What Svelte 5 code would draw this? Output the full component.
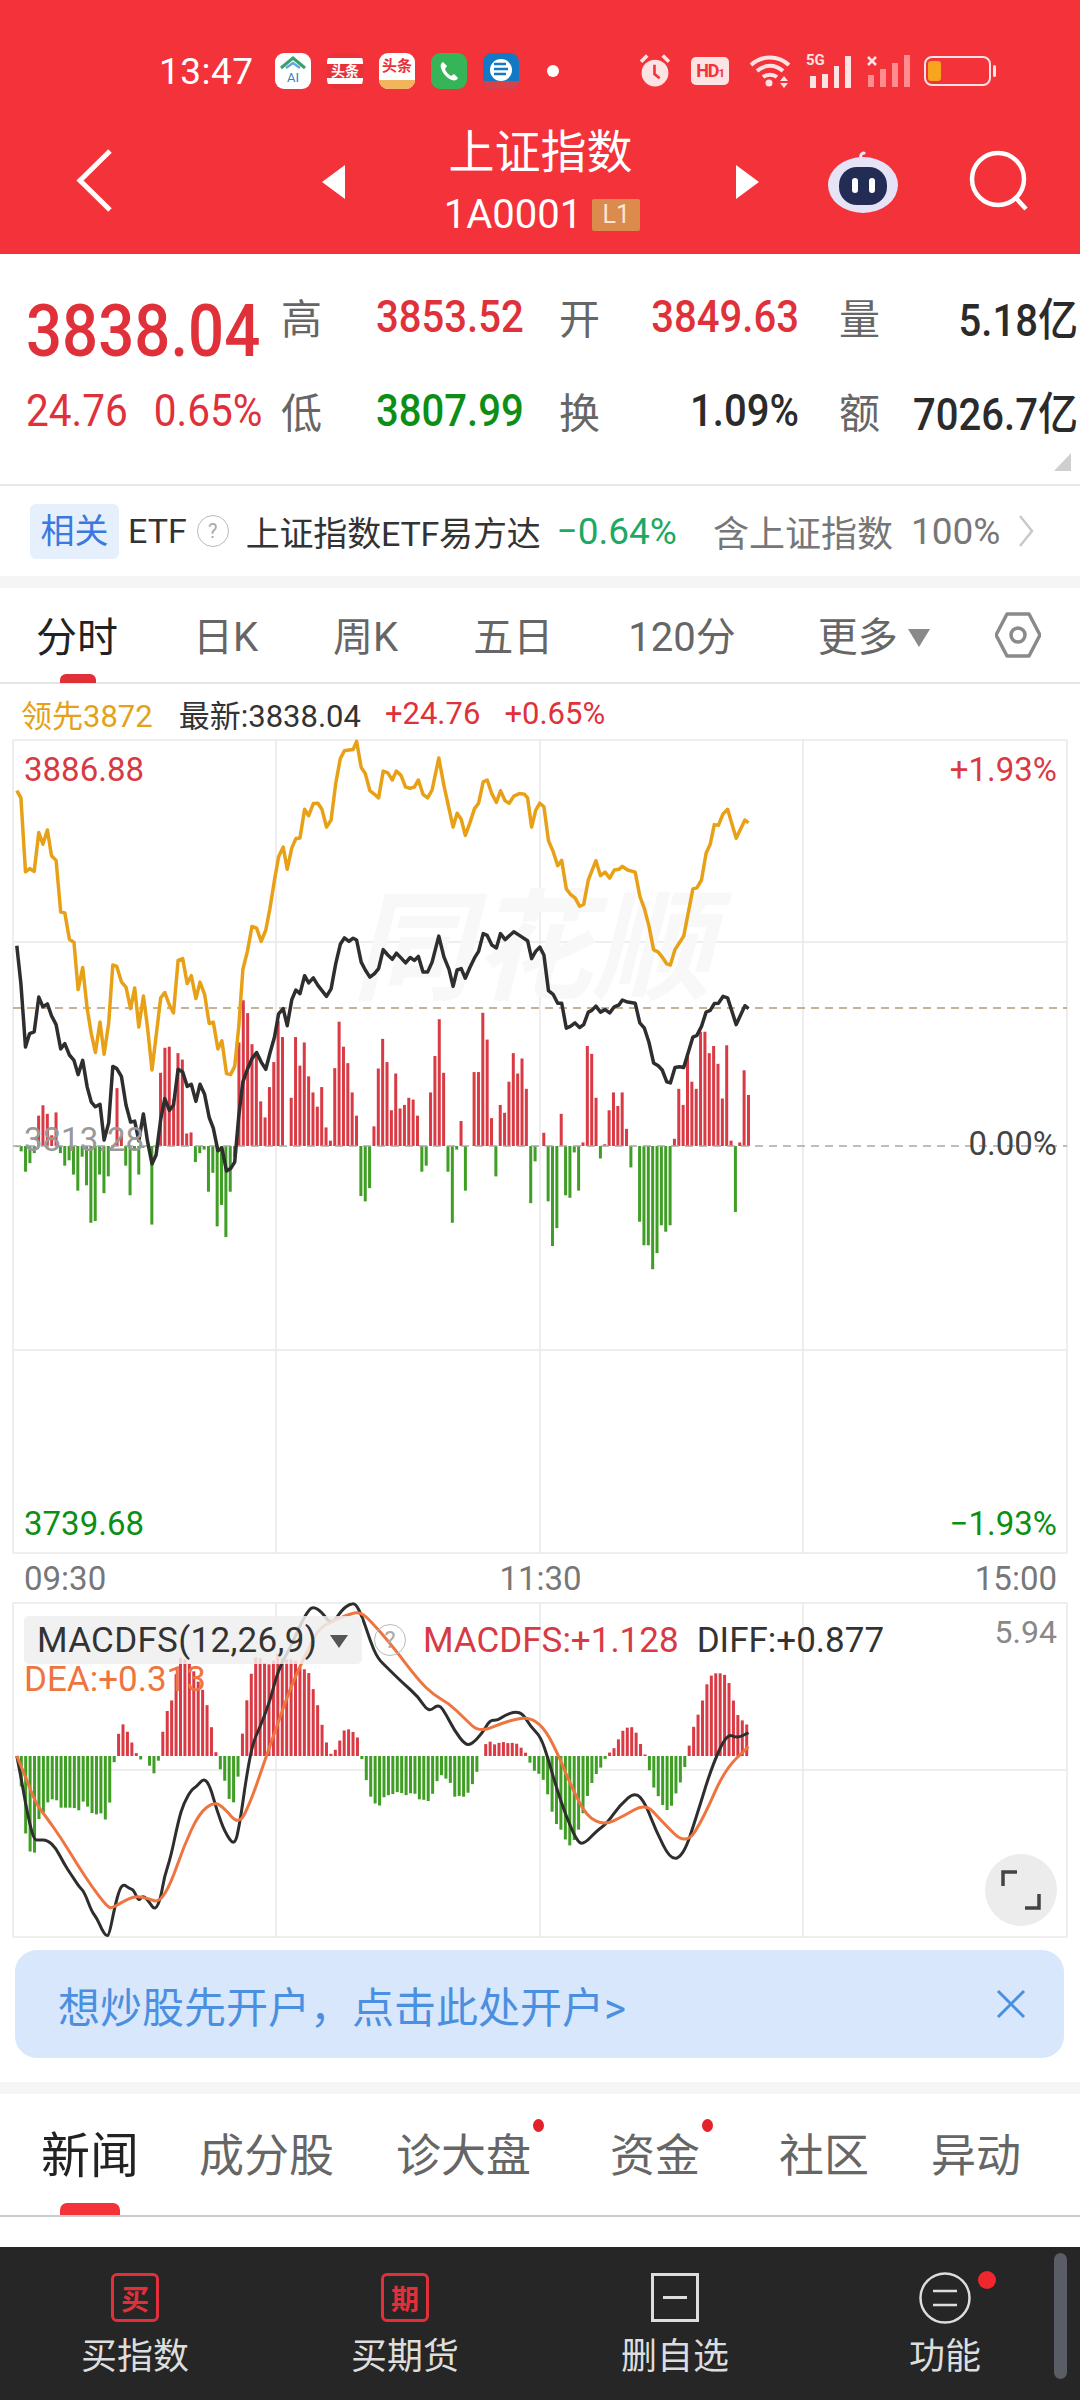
<script>
  const pts = (s, sx, sy, oy) => s.trim().split(/\s+/).map((p) => { const [x, y] = p.split(',').map(Number); return [x * sx, oy + y * sy]; });
  const poly = (a) => a.map((p) => p[0].toFixed(1) + ',' + p[1].toFixed(1)).join(' ');
  const smooth = (a) => {
    let d = `M${a[0][0].toFixed(1)} ${a[0][1].toFixed(1)}`;
    for (let i = 1; i < a.length - 1; i++) {
      const mx = (a[i][0] + a[i + 1][0]) / 2, my = (a[i][1] + a[i + 1][1]) / 2;
      d += `Q${a[i][0].toFixed(1)} ${a[i][1].toFixed(1)} ${mx.toFixed(1)} ${my.toFixed(1)}`;
    }
    const l = a[a.length - 1];
    return d + `L${l[0].toFixed(1)} ${l[1].toFixed(1)}`;
  };
  const SX = 1 / 1.96, SY = 1 / 2.8;
  const gold = poly(pts(`33,170 41,190 50,397 58,388 67,396 76,287 84,320 93,280 101,352 110,365 119,510 127,512 136,586 145,595 153,727 162,665 171,780 179,850 187,903 196,818 204,908 213,820 221,658 229,662 238,705 247,720 256,780 264,722 272,832 281,745 289,830 298,952 315,750 323,735 332,770 340,792 349,645 358,640 367,710 375,688 384,752 392,706 401,740 410,822 418,818 427,893 435,870 444,962 452,965 460,942 468,830 476,670 485,620 494,550 503,555 512,592 521,560 529,500 538,420 546,355 555,328 563,390 572,330 580,304 588,302 597,222 605,240 614,206 623,205 631,222 640,272 649,252 658,150 667,80 675,58 684,56 692,55 699,32 708,105 716,122 725,170 734,180 742,190 751,115 760,120 769,140 777,115 786,127 795,160 804,163 812,160 820,140 829,180 838,190 847,168 860,78 870,155 880,220 888,272 896,233 904,250 912,295 921,260 930,220 938,205 947,145 955,140 964,178 973,203 981,170 990,198 998,205 1007,185 1018,178 1028,180 1034,190 1042,272 1050,225 1058,205 1066,215 1075,310 1084,340 1093,380 1101,365 1110,445 1118,460 1127,470 1136,493 1144,488 1153,420 1160,395 1168,366 1177,408 1186,398 1195,415 1204,392 1213,390 1220,382 1230,392 1245,398 1254,465 1263,500 1272,550 1281,615 1290,622 1298,636 1307,655 1314,658 1323,615 1332,595 1340,577 1358,445 1366,442 1375,420 1384,345 1392,320 1400,265 1408,267 1417,235 1426,222 1443,303 1460,252 1467,260`, SX, SY, 730));
  const black = poly(pts(`33,604 41,710 50,888 58,850 67,845 76,748 84,775 93,767 101,800 110,825 119,893 127,878 136,910 145,925 153,965 162,925 171,1000 179,1042 187,1055 196,1048 204,1148 213,1100 221,942 229,948 238,970 247,1050 256,1098 264,1095 272,1150 281,1075 289,1150 298,1215 306,1190 315,1090 323,1032 332,1065 340,1050 349,950 358,958 367,998 375,992 384,1040 392,992 401,1020 410,1085 418,1115 427,1178 435,1170 444,1235 452,1228 460,1210 468,1080 476,985 485,950 494,920 503,903 512,930 521,950 529,905 538,860 546,795 555,780 563,828 572,755 580,728 588,738 597,688 605,708 614,694 623,715 640,746 649,725 658,655 667,600 675,582 684,592 692,583 699,588 708,650 716,672 725,692 734,682 742,668 751,615 760,630 769,642 777,625 786,638 795,652 804,637 812,645 820,634 829,678 838,678 847,650 860,577 870,635 880,670 888,718 896,672 904,668 912,695 921,665 930,638 938,620 947,570 955,575 964,602 973,610 981,570 990,587 1007,565 1018,575 1034,590 1042,640 1050,620 1058,608 1066,630 1075,730 1084,740 1093,765 1101,765 1110,835 1118,830 1127,820 1136,833 1144,825 1153,790 1160,785 1168,773 1177,790 1186,783 1195,792 1204,775 1213,770 1220,756 1230,762 1245,765 1254,820 1263,835 1272,875 1281,932 1290,940 1298,952 1307,985 1314,988 1323,945 1332,943 1340,945 1358,860 1366,855 1375,830 1384,790 1392,785 1400,766 1408,765 1417,746 1426,750 1443,825 1460,772 1467,780`, SX, SY, 730));
  const volData = [-3,-15,-72,-48,-20,85,114,90,30,94,-20,-55,-40,-80,-125,-30,-110,-215,-210,-80,-132,-85,-5,162,30,-55,-138,-10,-80,-5,0,-220,-5,205,275,278,130,260,242,35,38,-45,-20,-10,-128,-75,-225,-165,-255,-128,-30,290,408,372,285,262,125,80,165,235,350,305,0,135,305,225,290,195,150,110,165,52,15,218,348,278,232,150,85,-140,-155,-118,55,217,300,235,100,203,105,115,135,130,85,-72,-55,150,252,355,205,-72,-215,-10,70,-125,0,207,207,373,298,78,-85,115,93,180,260,203,245,160,-160,-43,0,37,-155,-280,-230,90,-138,-145,-18,-125,10,280,258,135,-35,5,100,150,112,150,48,-60,0,-212,-278,-278,-345,-300,-222,-240,-222,20,160,115,260,180,160,320,320,260,280,230,133,282,15,-185,10,212,143];
  const pitch = (1467 - 33) / (volData.length - 1);
  const vol = volData.map((v, i) => ({ x: (33 + pitch * i) * SX - 1.5, y: v > 0 ? 1146 - v * SY : 1146, h: Math.abs(v) * SY, red: v > 0 })).filter((b) => b.h > 0);

  const env = `33,0 41,-80 50,-230 58,-285 67,-298 76,-190 84,-172 93,-140 101,-130 110,-130 119,-155 145,-155 153,-168 162,-135 171,-150 179,-170 187,-178 196,-165 204,-198 213,-170 222,-38 230,52 238,100 247,85 256,45 264,30 272,-25 281,10 289,-10 298,-52 306,-52 315,25 323,118 332,150 340,180 349,295 358,295 367,285 375,270 384,240 392,210 401,190 410,120 418,60 427,-25 435,-50 444,-90 452,-150 460,-135 468,-45 476,80 485,180 494,260 503,305 512,290 521,275 529,275 538,290 546,310 555,290 572,290 580,285 588,265 597,260 605,250 614,200 623,150 631,95 640,40 649,5 658,20 667,50 675,78 684,80 692,72 700,60 708,0 716,-60 725,-118 734,-140 742,-155 751,-125 760,-118 769,-115 777,-108 786,-110 795,-118 804,-112 812,-110 820,-130 829,-130 838,-138 847,-118 855,-80 864,-55 872,-70 881,-60 886,-122 895,-122 904,-118 912,-125 921,-100 930,-72 938,-30 947,20 955,45 964,42 973,30 981,45 990,40 998,38 1007,40 1016,35 1024,20 1033,5 1041,-30 1050,-50 1059,-55 1067,-78 1076,-130 1085,-185 1094,-215 1103,-225 1111,-265 1120,-270 1129,-240 1137,-210 1146,-150 1155,-100 1163,-70 1172,-45 1180,-30 1190,5 1199,15 1207,30 1216,65 1225,85 1234,85 1243,88 1251,50 1260,22 1270,-20 1278,-85 1287,-110 1296,-140 1304,-160 1313,-165 1321,-125 1330,-95 1339,-55 1347,0 1355,65 1364,110 1373,140 1381,195 1390,235 1399,248 1417,248 1426,235 1434,190 1443,130 1452,110 1461,100 1468,85`.split(' ').map((p) => p.split(',').map(Number));
  const macdBars = [];
  for (let i = 0; i < 166; i++) {
    const zx = 33 + 8.67 * i;
    let k = 0;
    while (k < env.length - 2 && env[k + 1][0] < zx) k++;
    const [a, va] = env[k], [b, vb] = env[k + 1];
    const v = va + ((vb - va) * Math.min(1, (zx - a) / (b - a)));
    if (Math.abs(v) > 2) macdBars.push({ x: zx * SX - 1.5, y: v > 0 ? 1756 - v / 3 : 1756, h: Math.abs(v) / 3, red: v > 0 });
  }
  const diff = smooth(pts(`33,498 41,560 50,640 58,700 67,750 76,750 93,750 110,775 125,820 140,855 155,890 165,905 180,965 190,985 200,1020 208,1038 214,1035 225,950 235,895 243,883 253,895 262,900 272,935 280,915 292,935 304,962 315,925 322,860 335,800 350,690 360,640 375,600 385,590 400,563 412,590 425,660 440,725 460,770 470,700 482,570 495,460 510,410 530,330 545,240 570,170 590,100 605,60 615,50 630,65 650,105 670,60 685,42 697,40 710,80 725,150 740,205 760,235 790,280 820,320 840,368 860,340 875,375 890,420 912,465 925,462 945,430 960,390 975,392 990,375 1010,365 1025,372 1040,410 1060,440 1075,510 1090,590 1110,680 1130,750 1143,765 1170,722 1190,700 1215,645 1245,605 1265,640 1285,720 1315,812 1340,795 1365,680 1395,530 1425,430 1445,445 1467,428`, SX, 1 / 3, 1590));
  const dea = smooth(pts(`33,498 50,560 70,640 90,680 120,745 150,820 180,890 210,950 220,955 240,935 265,918 290,925 312,938 335,880 360,770 390,670 420,635 440,655 468,705 490,640 515,530 540,420 570,290 600,190 625,115 650,95 680,75 705,65 725,90 770,170 820,270 850,315 880,340 910,385 940,428 990,395 1035,380 1065,410 1090,480 1120,590 1150,680 1185,705 1220,680 1265,640 1295,690 1345,768 1380,680 1420,540 1467,470`, SX, 1 / 3, 1590));

  const vlines = [13, 276, 540, 803, 1067];
  const topTabs = ['分时', '日K', '周K', '五日', '120分'];
  const newsTabs = [
    { t: '新闻', cls: 'on' }, { t: '成分股', cls: '' }, { t: '诊大盘', cls: 'dot' },
    { t: '资金', cls: 'dot' }, { t: '社区', cls: '' }, { t: '异动', cls: '' }
  ];
</script>

<div class="page">
  <header class="head">
    <div class="status">
      <span class="time">13:47</span>
      <span class="tile ai"><svg width="30" height="30" viewBox="0 0 30 30"><path d="M3 14 15 4l12 10" fill="none" stroke="#3aa06a" stroke-width="3"/><path d="M8 14 15 9l7 5" fill="none" stroke="#5fa8e0" stroke-width="2.5"/></svg><b>AI</b></span>
      <span class="tile tt"><i></i>头条<i></i></span>
      <span class="tile tt2">头条<em></em></span>
      <span class="tile phone"><svg width="24" height="24" viewBox="0 0 24 24"><path d="M6 3c-2 1-3 3-2 6 2 6 6 10 11 12 3 1 5 0 6-2l-4-4-3 2c-3-2-5-4-6-7l2-3z" fill="#fff"/></svg></span>
      <span class="tile zx"><svg width="30" height="26" viewBox="0 0 30 26"><circle cx="15" cy="12" r="11" fill="#fff"/><path d="M8 6h12M8 11h14M8 16h12" stroke="#1479c4" stroke-width="2.5"/></svg><em></em></span>
      <span class="sdot"></span>
      <svg class="alarm" width="32" height="36" viewBox="0 0 31 34"><circle cx="15.5" cy="19" r="13" fill="#fde3e4"/><path d="M15 11v9l5 4" fill="none" stroke="#f3323a" stroke-width="2.5"/><path d="M2 8 8 2M29 8l-6-6" stroke="#fde3e4" stroke-width="3.5"/></svg>
      <span class="hd">HD<small>1</small></span>
      <svg class="wifi" width="45" height="34" viewBox="0 0 45 34"><path d="M3 11c11-10 27-10 38 0M9 17c8-7 18-7 26 0M15 23c4-3 10-3 14 0" fill="none" stroke="#fde3e4" stroke-width="4"/><circle cx="21" cy="29" r="3.5" fill="#fde3e4"/><path d="M36 22l4 5h-8zM36 34l4-5h-8z" fill="#fde3e4"/></svg>
      <span class="sig5"><small>5G</small><svg width="45" height="34" viewBox="0 0 45 34"><path d="M3 34V22h6v12zM15 34V20h6v14zM27 34V12h5v22zM38 34V2h6v32z" fill="#fde3e4"/></svg></span>
      <svg class="sigx" width="43" height="32" viewBox="0 0 43 32"><path d="M1 2l8 8M9 2l-8 8" stroke="#fde3e4" stroke-width="2.5"/><path d="M1 32V20h6v12zM13 32V14h6v18zM25 32V8h6v24zM37 32V0h6v32z" fill="#ff8d8f"/></svg>
      <span class="batt"><i></i></span>
    </div>
    <div class="nav">
      <svg class="back" width="37" height="65" viewBox="0 0 37 65"><path d="M34 3 4 32.5 34 62" fill="none" stroke="#fff" stroke-width="5"/></svg>
      <svg class="tl" width="23" height="34" viewBox="0 0 23 34"><path d="M23 0v34L0 17z" fill="#fff"/></svg>
      <div class="title">
        <div class="name">上证指数</div>
        <div class="code">1A0001<span class="l1">L1</span></div>
      </div>
      <svg class="tr" width="23" height="34" viewBox="0 0 23 34"><path d="M0 0v34l23-17z" fill="#fff"/></svg>
      <svg class="robot" width="74" height="68" viewBox="0 0 74 66"><path d="M36 12c-3-4 0-9 3-6" fill="none" stroke="#e8e6f8" stroke-width="3"/><ellipse cx="37" cy="37" rx="35" ry="28" fill="#e6e3f7"/><rect x="13" y="19" width="48" height="38" rx="18" fill="#232c54"/><rect x="26" y="30" width="6" height="15" rx="3" fill="#fff"/><rect x="43" y="30" width="6" height="15" rx="3" fill="#fff"/></svg>
      <svg class="search" width="62" height="62" viewBox="0 0 62 62"><circle cx="29" cy="29" r="26" fill="none" stroke="#fff" stroke-width="4.5"/><path d="M46 47l11 12" stroke="#fff" stroke-width="4.5"/></svg>
    </div>
  </header>

  <section class="quote">
    <div class="big">3838.04</div>
    <div class="lb">高</div><div class="red num">3853.52</div>
    <div class="lb">开</div><div class="red num r1">3849.63</div>
    <div class="lb">量</div><div class="dark num r2">5.18亿</div>
    <div class="chg"><span>24.76</span><span>0.65%</span></div>
    <div class="lb">低</div><div class="grn num">3807.99</div>
    <div class="lb">换</div><div class="dark num r1">1.09%</div>
    <div class="lb">额</div><div class="dark num r2">7026.7亿</div>
    <span class="corner"></span>
  </section>

  <section class="etf">
    <span class="tag">相关</span>
    <span class="etfname">ETF</span>
    <span class="qm">?</span>
    <span class="fund">上证指数ETF易方达</span>
    <span class="pct">−0.64%</span>
    <span class="incl">含上证指数</span>
    <span class="hund">100%</span>
    <svg class="chev" width="16" height="32" viewBox="0 0 16 32"><path d="M2 1l12 15L2 31" fill="none" stroke="#c9c9c9" stroke-width="2.5"/></svg>
  </section>
  <div class="band"></div>

  <nav class="tabs">
    {#each topTabs as t, i}
      <span class="tab" class:active={i === 0}>{t}</span>
    {/each}
    <span class="tab more">更多<i class="tri"></i></span>
    <svg class="hex" width="46" height="46" viewBox="0 0 46 46"><path d="M12 2h22l11 21-11 21H12L1 23z" fill="none" stroke="#8a8a8a" stroke-width="3.5" stroke-linejoin="round"/><circle cx="23" cy="23" r="7" fill="none" stroke="#8a8a8a" stroke-width="3.5"/></svg>
  </nav>

  <div class="legend">
    <span class="lead">领先3872</span>
    <span class="latest">最新:3838.04</span>
    <span class="lred">+24.76</span>
    <span class="lred">+0.65%</span>
  </div>

  <div class="chart">
    <svg width="1080" height="818" viewBox="0 738 1080 818">
      {#each vlines as x}<line x1={x} x2={x} y1="740" y2="1553" stroke="#e8e8e8" stroke-width="1.5"/>{/each}
      {#each [740, 942, 1350, 1553] as y}<line x1="13" x2="1067" y1={y} y2={y} stroke="#e8e8e8" stroke-width="1.5"/>{/each}
      <text class="wm" x="352" y="990">同花顺</text>
      <line x1="13" x2="1067" y1="1008" y2="1008" stroke="#b39a78" stroke-width="1.5" stroke-dasharray="8 6"/>
      {#each vol as b}<rect x={b.x} y={b.y} width="3" height={b.h} fill={b.red ? '#d93a44' : '#3f9e24'}/>{/each}
      <line x1="13" x2="1067" y1="1146" y2="1146" stroke="#a8a8a8" stroke-width="1.5" stroke-dasharray="8 6"/>
      <polyline points={gold} fill="none" stroke="#e8a117" stroke-width="3.5" stroke-linejoin="round"/>
      <polyline points={black} fill="none" stroke="#2e2e2e" stroke-width="3.5" stroke-linejoin="round"/>
    </svg>
    <span class="cl red1 tl1">3886.88</span>
    <span class="cl red1 tr1">+1.93%</span>
    <span class="cl gray1 ml1">3813.28</span>
    <span class="cl dark1 mr1">0.00%</span>
    <span class="cl grn1 bl1">3739.68</span>
    <span class="cl grn1 br1">−1.93%</span>
  </div>

  <div class="times"><span>09:30</span><span>11:30</span><span>15:00</span></div>

  <div class="macd">
    <svg width="1080" height="340" viewBox="0 1600 1080 340">
      {#each vlines as x}<line x1={x} x2={x} y1="1603" y2="1937" stroke="#e8e8e8" stroke-width="1.5"/>{/each}
      {#each [1603, 1770, 1937] as y}<line x1="13" x2="1067" y1={y} y2={y} stroke="#e8e8e8" stroke-width="1.5"/>{/each}
      {#each macdBars as b}<rect x={b.x} y={b.y} width="3" height={b.h} fill={b.red ? '#d93a44' : '#3f9e24'}/>{/each}
      <path d={diff} fill="none" stroke="#2e2e2e" stroke-width="3"/>
      <path d={dea} fill="none" stroke="#ee7440" stroke-width="3"/>
    </svg>
    <div class="mrow">
      <span class="mtag">MACDFS(12,26,9)<i class="tri2"></i></span>
      <span class="qm m">?</span>
      <span class="mval">MACDFS:+1.128</span>
      <span class="mdiff">DIFF:+0.877</span>
    </div>
    <span class="mdea">DEA:+0.313</span>
    <span class="mmax">5.94</span>
    <span class="expand"><svg width="40" height="40" viewBox="0 0 40 40"><path d="M2 16V2h14M24 38h14V24" fill="none" stroke="#444" stroke-width="3.5"/></svg></span>
  </div>

  <div class="banner">
    <span>想炒股先开户，点击此处开户&gt;</span>
    <svg width="30" height="30" viewBox="0 0 30 30"><path d="M2 2l26 26M28 2 2 28" stroke="#4a8fe0" stroke-width="3"/></svg>
  </div>
  <div class="band b2"></div>

  <nav class="news">
    {#each newsTabs as n}
      <span class="ntab {n.cls}">{n.t}</span>
    {/each}
  </nav>
  <div class="gap"></div>

  <footer class="bar">
    <div class="item"><span class="box red">买</span><span class="lab">买指数</span></div>
    <div class="item"><span class="box red">期</span><span class="lab">买期货</span></div>
    <div class="item"><span class="box wht"><i></i></span><span class="lab">删自选</span></div>
    <div class="item fn">
      <svg width="52" height="52" viewBox="0 0 52 52"><circle cx="26" cy="26" r="24.5" fill="none" stroke="#ddd" stroke-width="2.5"/><path d="M14 19h24M14 33h24" stroke="#ddd" stroke-width="2.5"/></svg>
      <span class="lab">功能</span>
      <i class="rd"></i>
    </div>
    <span class="scroll"></span>
  </footer>
</div>

<style>
  :global(body) { margin: 0; background: #fff; }
  .page { width: 1080px; height: 2400px; overflow: hidden; font-family: Roboto, "Noto Sans CJK SC", sans-serif; position: relative; }
  .head { height: 254px; background: #f3323a; color: #fff; box-sizing: border-box; padding-top: 53px; }
  .status { display: flex; align-items: center; height: 36px; padding-left: 159px; }
  .time { font-size: 37px; color: #fff; width: 116px; letter-spacing: .5px; }
  .tile { width: 36px; height: 36px; border-radius: 9px; background: #fff; margin-right: 16px; position: relative; display: flex; flex-direction: column; align-items: center; justify-content: center; overflow: hidden; font-size: 15px; font-weight: 700; color: #e8323a; line-height: 1; flex: none; }
  .tile.ai svg { position: absolute; top: 1px; left: 3px; }
  .tile.ai b { font-size: 13px; color: #3a7fbe; margin-top: 12px; font-weight: 400; }
  .tile.tt i { display: block; width: 100%; height: 6px; background: #fff; }
  .tile.tt { background: #e8323a; color: #fff; font-size: 14px; }
  .tile.tt2 { background: #fff; font-size: 15px; justify-content: flex-start; padding-top: 6px; box-sizing: border-box; }
  .tile.tt2 em { position: absolute; left: 0; right: 0; bottom: 0; height: 9px; background: #f2b45c; }
  .tile.phone { background: #35b557; }
  .tile.zx { background: #1479c4; }
  .tile.zx em { position: absolute; left: 0; right: 0; bottom: 0; height: 8px; background: #d8404a; }
  .sdot { width: 12px; height: 12px; border-radius: 50%; background: #fff; margin-left: 12px; margin-right: 80px; }
  .alarm { margin-right: 20px; }
  .hd { width: 38px; height: 28px; background: #fde3e4; border-radius: 5px; color: #f3323a; font-size: 18px; font-weight: 700; line-height: 28px; text-align: center; margin-right: 19px; letter-spacing: -1px; }
  .hd small { font-size: 11px; }
  .wifi { margin-right: 14px; }
  .sig5 { position: relative; width: 45px; height: 34px; margin-right: 15px; }
  .sig5 small { position: absolute; left: -1px; top: -2px; font-size: 15px; font-weight: 700; color: #fde3e4; line-height: 16px; }
  .sig5 svg { display: block; }
  .sigx { margin-right: 14px; }
  .batt { width: 63px; height: 26px; border: 2.5px solid #fde3e4; border-radius: 8px; display: block; position: relative; box-sizing: content-box; }
  .batt i { position: absolute; left: 2px; top: 3px; width: 13px; height: 20px; background: #f8a51d; border-radius: 3px; }
  .batt::after { content: ""; position: absolute; right: -7px; top: 7px; width: 3px; height: 12px; background: #fde3e4; border-radius: 2px; }
  .nav { display: flex; align-items: center; height: 165px; position: relative; margin-top: 9px; }
  .back { margin-left: 76px; }
  .tl { margin-left: 209px; margin-top: 2px; }
  .title { width: 391px; text-align: center; display: flex; flex-direction: column; align-items: center; }
  .name { font-size: 46px; line-height: 56px; }
  .code { font-size: 40px; line-height: 44px; margin-top: 13px; padding-left: 3px; display: flex; align-items: center; gap: 10px; }
  .l1 { width: 48px; height: 32px; background: #db8b4c; border-radius: 2px; font-size: 25px; line-height: 32px; text-align: center; color: #fbe6d4; }
  .tr { margin-top: 2px; }
  .robot { margin-left: 67px; }
  .search { margin-left: 69px; }

  .quote { height: 232px; box-sizing: border-box; padding: 15px 0 0 26px; border-bottom: 2px solid #e8e8e8; display: grid; grid-template-columns: 255px 95px 183px 50px 230px 40px 1fr; grid-auto-rows: 94px; align-items: center; position: relative; font-size: 45px; }
  .big { font-size: 73px; color: #e0313a; font-weight: 500; padding-top: 30px; transform: scaleX(.87); transform-origin: left center; white-space: nowrap; }
  .chg { font-size: 45px; color: #e0313a; display: flex; gap: 29px; white-space: nowrap; transform: scaleX(.9); transform-origin: left center; }
  .lb { font-size: 41px; color: #666; white-space: nowrap; }
  .red { color: #e0313a; font-weight: 500; }
  .grn { color: #0d8f16; font-weight: 500; }
  .dark { color: #2b2b2b; font-weight: 500; }
  .num { transform: scaleX(.89); transform-origin: left center; white-space: nowrap; }
  .r1 { text-align: right; padding-right: 40px; transform-origin: calc(100% - 40px) center; }
  .r2 { text-align: right; padding-right: 2px; transform-origin: calc(100% - 2px) center; }
  .corner { position: absolute; right: 9px; top: 199px; width: 0; height: 0; border-left: 17px solid transparent; border-bottom: 18px solid #cfcfcf; }

  .etf { height: 90px; display: flex; align-items: center; padding-left: 30px; font-size: 34px; color: #333; box-sizing: border-box; }
  .tag { width: 89px; height: 55px; background: #e6effc; border-radius: 6px; color: #3b78e0; text-align: center; line-height: 55px; margin-right: 9px; }
  .etfname { margin-right: 10px; }
  .qm { width: 30px; height: 30px; border: 1.5px solid #bbb; border-radius: 50%; color: #aaa; font-size: 20px; line-height: 30px; text-align: center; box-sizing: content-box; margin-right: 17px; }
  .fund { margin-right: 16px; letter-spacing: -.2px; }
  .pct { color: #1ea866; margin-right: 36px; font-size: 37px; }
  .incl { color: #777; font-size: 36px; margin-right: 18px; }
  .hund { color: #777; margin-right: 18px; font-size: 37px; }
  .band { height: 12px; background: #f5f5f5; }

  .tabs { height: 96px; box-sizing: border-box; border-bottom: 2px solid #e5e5e5; display: flex; align-items: center; padding: 6px 0 0 36px; gap: 75px; position: relative; font-size: 40px; color: #666; }
  .tab { position: relative; line-height: 90px; white-space: nowrap; }
  .tab.active { color: #222; font-size: 41px; }
  .tab.active::after { content: ""; position: absolute; left: 24px; bottom: 0; width: 36px; height: 9px; background: #e0313a; border-radius: 6px 6px 0 0; }
  .more { display: flex; align-items: center; gap: 10px; margin-left: 7px; }
  .tri { width: 0; height: 0; border: 11px solid transparent; border-top: 18px solid #8a8a8a; border-bottom: 0; }
  .hex { margin-left: -10px; margin-top: -6px; flex: none; }

  .legend { height: 54px; display: flex; align-items: center; padding: 4px 0 0 21px; font-size: 31px; gap: 24px; color: #333; box-sizing: border-box; }
  .lead { color: #e3a21a; margin-right: 2px; }
  .lred { color: #e0313a; }

  .chart { height: 818px; position: relative; }
  .chart svg, .macd svg { display: block; }
  .wm { font-size: 120px; fill: #f8f8f8; font-style: italic; font-family: "Noto Sans CJK SC", sans-serif; font-weight: 700; }
  .cl { position: absolute; font-size: 33px; line-height: 40px; }
  .red1 { color: #d83a44; }
  .grn1 { color: #0d8f16; }
  .gray1 { color: #999; }
  .dark1 { color: #444; }
  .tl1 { left: 24px; top: 12px; }
  .tr1 { right: 23px; top: 12px; }
  .ml1 { left: 24px; top: 382px; }
  .mr1 { right: 23px; top: 386px; }
  .bl1 { left: 24px; top: 766px; }
  .br1 { right: 23px; top: 766px; }

  .times { height: 44px; display: flex; justify-content: space-between; align-items: center; padding: 0 23px 0 24px; font-size: 33px; color: #777; }
  .macd { height: 340px; position: relative; }
  .mrow { position: absolute; left: 24px; top: 14px; display: flex; align-items: center; font-size: 35px; line-height: 48px; white-space: nowrap; }
  .mtag { width: 338px; height: 48px; box-sizing: border-box; background: rgba(238, 238, 238, .85); border-radius: 5px; padding: 3px 0 0 13px; color: #333; display: flex; align-items: center; position: relative; letter-spacing: .3px; }
  .tri2 { position: absolute; left: 306px; top: 19px; width: 0; height: 0; border: 9px solid transparent; border-top: 13px solid #555; border-bottom: 0; }
  .qm.m { margin-left: 12px; margin-right: 17px; font-size: 24px; }
  .mval { color: #d83a44; margin-right: 18px; padding-top: 3px; }
  .mdiff { color: #333; padding-top: 3px; }
  .mdea { position: absolute; left: 24px; top: 60px; font-size: 35px; line-height: 40px; color: #ee7440; }
  .mmax { position: absolute; right: 23px; top: 10px; font-size: 32px; line-height: 44px; color: #888; }
  .expand { position: absolute; left: 985px; top: 254px; width: 72px; height: 72px; border-radius: 50%; background: #ececec; display: flex; align-items: center; justify-content: center; }

  .banner { height: 108px; margin: 10px 16px 0 15px; background: #d8e7fb; border-radius: 22px; display: flex; align-items: center; justify-content: space-between; padding: 0 38px 0 43px; font-size: 42px; color: #4a8fe0; }
  .b2 { margin-top: 24px; }

  .news { height: 123px; box-sizing: border-box; border-bottom: 2px solid #ccc; display: flex; align-items: center; padding: 5px 0 0 41px; gap: 62px; font-size: 45px; color: #666; }
  .ntab { position: relative; line-height: 116px; white-space: nowrap; }
  .ntab.on { font-size: 49px; color: #222; margin-right: -2px; }
  .ntab.on::after { content: ""; position: absolute; left: 19px; bottom: 0; width: 60px; height: 12px; border-radius: 7px 7px 0 0; background: #f3323a; }
  .ntab.dot { padding-right: 17px; }
  .ntab.dot::after { content: ""; position: absolute; right: 4px; top: 20px; width: 11px; height: 13px; border-radius: 50%; background: #e4202a; }
  .gap { height: 30px; }

  .bar { height: 153px; background: #262626; display: grid; grid-template-columns: repeat(4, 270px); position: relative; }
  .item { display: flex; flex-direction: column; align-items: center; padding-top: 26px; color: #ddd; position: relative; }
  .item svg { display: block; }
  .box { width: 48px; height: 49px; box-sizing: border-box; border-radius: 6px; font-size: 28px; font-weight: 700; display: flex; align-items: center; justify-content: center; }
  .box.red { border: 3px solid #e2303a; color: #e2303a; }
  .box.wht { border: 3px solid #ddd; border-radius: 0; }
  .box.wht i { width: 24px; height: 3px; background: #ddd; }
  .lab { font-size: 36px; line-height: 44px; margin-top: 13px; }
  .rd { position: absolute; left: 168px; top: 24px; width: 18px; height: 18px; border-radius: 50%; background: #f0262e; }
  .fn { padding-top: 25px; }
  .fn .lab { margin-top: 11px; }
  .scroll { position: absolute; left: 1054px; top: 6px; width: 13px; height: 126px; border-radius: 7px; background: #5a5c66; }
</style>
